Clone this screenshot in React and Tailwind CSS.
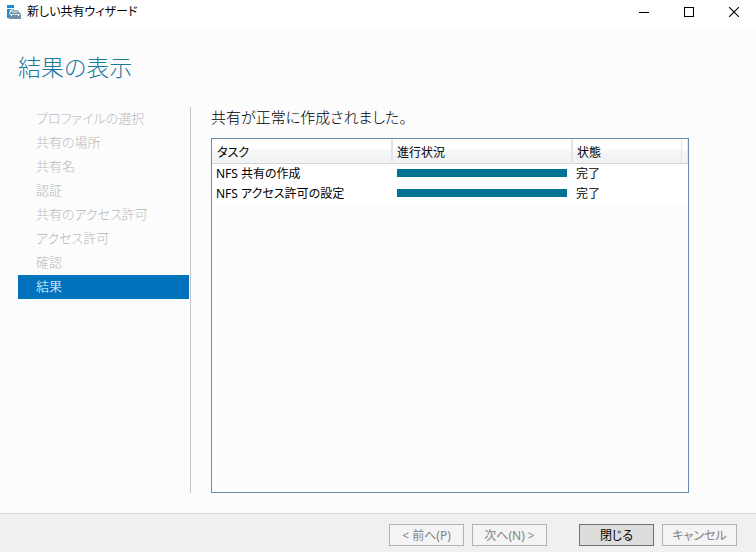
import React from "react";

const steps = [
  "プロファイルの選択",
  "共有の場所",
  "共有名",
  "認証",
  "共有のアクセス許可",
  "アクセス許可",
  "確認",
  "結果",
];

const tasks = [
  { name: "NFS 共有の作成", progress: 100, status: "完了" },
  { name: "NFS アクセス許可の設定", progress: 100, status: "完了" },
];

function WizardIcon() {
  return (
    <svg width="16" height="16" viewBox="0 0 16 16" aria-hidden="true">
      <path d="M0 1h7v3H0zM0 5h4v1H3v2H2v6H0z" fill="#1e8ad6" />
      <path d="M4 5h3v1H4z" fill="#8cc4ec" />
      <path d="M4.6 9V8Q4.8 6.9 6 6.9h4Q11.2 6.9 11.4 8v1" fill="none" stroke="#6f90a3" strokeWidth="1.1" />
      <path d="M3 8.6h10L14 10v5H2v-5z" fill="#6f90a3" />
      <path d="M2.6 10.5h10.8" stroke="#dfe8ed" strokeWidth="0.9" />
      <path d="M4.5 10v2M11.5 10v2" stroke="#fff" strokeWidth="1" />
    </svg>
  );
}

const captionButton = "flex h-6 w-[45px] items-center justify-center";

function TitleBar() {
  return (
    <header className="flex h-7 items-start bg-white pl-[7px]">
      <div className="flex h-6 flex-1 items-center gap-1 text-xs text-black">
        <WizardIcon />
        <span>新しい共有ウィザード</span>
      </div>
      <button type="button" aria-label="最小化" className={captionButton}>
        <svg width="10" height="10" viewBox="0 0 10 10" shapeRendering="crispEdges">
          <path d="M0 5h10v1H0z" />
        </svg>
      </button>
      <button type="button" aria-label="最大化" className={captionButton}>
        <svg width="10" height="10" viewBox="0 0 10 10" fill="none" stroke="#000" shapeRendering="crispEdges">
          <path d="M.5.5h9v9h-9z" />
        </svg>
      </button>
      <button type="button" aria-label="ウィンドウを閉じる" className={captionButton}>
        <svg width="10" height="10" viewBox="0 0 10 10" fill="none" stroke="#000" strokeWidth="1.1">
          <path d="M0 0l10 10M10 0L0 10" />
        </svg>
      </button>
    </header>
  );
}

function StepList() {
  return (
    <nav className="w-[173px] shrink-0 border-r border-[#c4c4c4] pr-px">
      <ol>
        {steps.map((step, i) => {
          const current = i === steps.length - 1;
          return (
            <li
              key={step}
              aria-current={current ? "step" : undefined}
              className={
                "h-6 pl-[18px] text-[13px] leading-[22px] font-light " +
                (current ? "bg-[#0072bc] text-white" : "text-[#b8b8b8]")
              }
            >
              {step}
            </li>
          );
        })}
      </ol>
    </nav>
  );
}

const headCell = "border-b border-r-[#e3e4e6] border-b-[#d5d5d5] pt-1 pb-0 font-normal leading-4 ";

function ResultTable() {
  return (
    <div className="flex-1 border border-[#688caf]">
      <table className="w-full table-fixed border-collapse text-left text-xs text-black">
        <colgroup>
          <col className="w-[180px]" />
          <col className="w-[180px]" />
          <col />
          <col className="w-1.5" />
        </colgroup>
        <thead>
          <tr className="h-6 bg-linear-to-b from-white from-40% via-[#f7f8fa] via-40% to-[#f1f2f4]">
            <th className={headCell + "border-r-2 pl-[5px]"}>タスク</th>
            <th className={headCell + "border-r-2 pl-1"}>進行状況</th>
            <th className={headCell + "border-r pl-1"}>状態</th>
            <td className={headCell + "border-r px-0"} />
          </tr>
        </thead>
        <tbody>
          {tasks.map((task) => (
            <tr key={task.name} className="h-5 bg-white">
              <td className="p-0 pt-px pl-1 leading-4">{task.name}</td>
              <td className="p-0 px-[5px]">
                <div role="progressbar" aria-label={task.name} aria-valuenow={task.progress} className="h-2">
                  <div className="h-2 bg-[#007394]" style={{ width: task.progress + "%" }} />
                </div>
              </td>
              <td className="p-0 pt-px pl-1 leading-4">{task.status}</td>
              <td className="p-0" />
            </tr>
          ))}
        </tbody>
      </table>
    </div>
  );
}

const buttonBase = "h-[22px] w-[75px] border pt-px text-xs leading-5 ";
const disabledButton = buttonBase + "border-[#adb2b5] bg-[#f4f4f4] text-[#838383]";
const activeButton = buttonBase + "border-[#707070] bg-[#dddddd] text-black";

export default function App() {
  return (
    <div className="flex min-h-screen flex-col bg-[#fcfcfc] font-['Noto_Sans','Noto_Sans_CJK_JP',sans-serif] [font-feature-settings:'palt']">
      <TitleBar />
      <main className="flex flex-1 flex-col pr-[67px] pb-5 pl-[18px]">
        <h1 className="pt-[19px] pb-5 text-[23px] leading-10 font-light text-[#1a7a9c]">結果の表示</h1>
        <div className="flex flex-1 gap-5">
          <StepList />
          <section className="flex flex-1 flex-col">
            <p className="h-[31px] text-[15px] leading-5 font-light text-black">共有が正常に作成されました。</p>
            <ResultTable />
          </section>
        </div>
      </main>
      <footer className="flex justify-end gap-8 border-t border-[#dcdcdc] bg-[#f0f0f0] pt-[10px] pr-[19px] pb-[6px]">
        <div className="flex gap-2">
          <button type="button" disabled className={disabledButton}>&lt; 前へ(P)</button>
          <button type="button" disabled className={disabledButton}>次へ(N) &gt;</button>
        </div>
        <div className="flex gap-2">
          <button type="button" className={activeButton}>閉じる</button>
          <button type="button" disabled className={disabledButton}>キャンセル</button>
        </div>
      </footer>
    </div>
  );
}
